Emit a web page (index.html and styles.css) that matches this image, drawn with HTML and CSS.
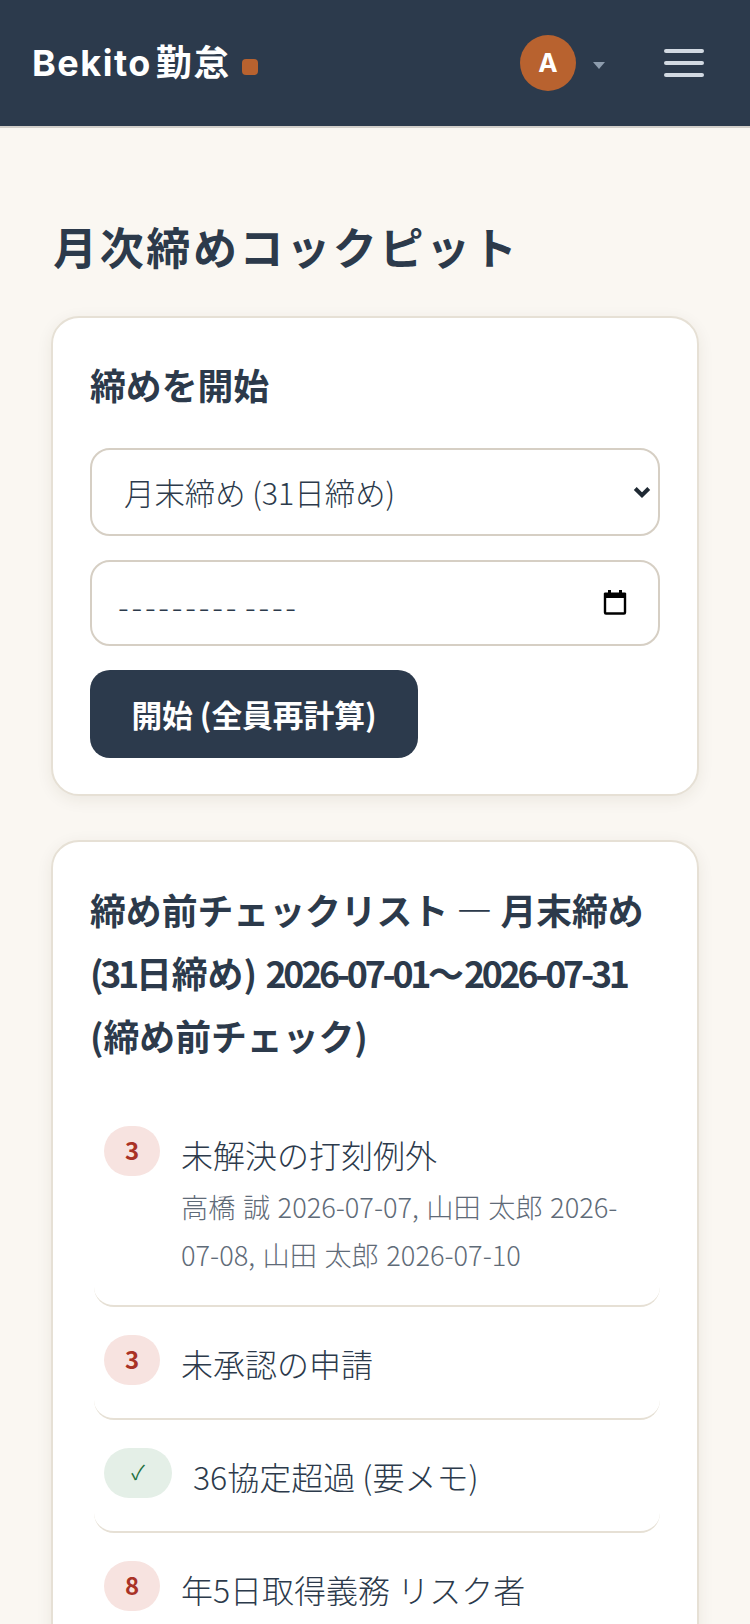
FILE: index.html
```html
<!DOCTYPE html>
<html lang="ja">
<head>
<meta charset="utf-8">
<title>月次締めコックピット</title>
<link rel="stylesheet" href="styles.css">
</head>
<body>
<header class="topbar">
  <div class="brand"><span>Bekito 勤怠</span><span class="brand-dot"></span></div>
  <div class="top-actions">
    <div class="user"><span class="avatar">A</span><span class="caret"></span></div>
    <button class="burger" aria-label="menu"><span></span><span></span><span></span></button>
  </div>
</header>
<main class="page">
  <h1 class="title">月次締めコックピット</h1>
  <section class="card">
    <h2 class="card-title">締めを開始</h2>
    <form class="form">
      <div class="field">
        <select class="control select"><option>月末締め (31日締め)</option></select>
        <svg class="chevron" viewBox="0 0 20 14"><path d="M2.500 2.500 10 10l7.500-7.500" fill="none" stroke="#1f2933" stroke-width="4.500"/></svg>
      </div>
      <div class="field">
        <input class="control date" type="text" value="--------- ----" aria-label="date">
        <svg class="cal" viewBox="0 0 24 26"><path d="M2 5.500h20v18a1 1 0 0 1-1 1H3a1 1 0 0 1-1-1z" fill="none" stroke="#000" stroke-width="2.400"/><path d="M1 4.500a1 1 0 0 1 1-1h3V1h3v2.500h8V1h3v2.500h3a1 1 0 0 1 1 1V9H1z" fill="#000"/></svg>
      </div>
      <button class="primary" type="button">開始 (全員再計算)</button>
    </form>
  </section>
  <section class="card">
    <h2 class="card-title long">締め前チェックリスト — 月末締め <span class="num">(31</span>日締め<span class="num">) 2026-07-01</span>〜<span class="num">2026-07-31</span> (締め前チェック)</h2>
    <ul class="checks">
      <li class="check"><span class="badge bad">3</span><div class="check-body"><div>未解決の打刻例外</div><div class="sub">高橋 誠 2026-07-07, 山田 太郎 2026-07-08, 山田 太郎 2026-07-10</div></div></li>
      <li class="check"><span class="badge bad">3</span><div class="check-body"><div>未承認の申請</div></div></li>
      <li class="check"><span class="badge ok">✓</span><div class="check-body"><div>36協定超過 (要メモ)</div></div></li>
      <li class="check"><span class="badge bad">8</span><div class="check-body"><div>年5日取得義務 リスク者</div></div></li>
    </ul>
  </section>
</main>
</body>
</html>
```
FILE: styles.css
```css
* { box-sizing: border-box; }
html, body { margin: 0; height: 1624px; overflow: hidden; }
body {
  background: #faf7f2;
  color: #2c3a4b;
  font-family: "Noto Sans CJK JP", sans-serif;
  font-weight: 300;
  font-size: 32px;
  line-height: 1.75;
}
.topbar {
  height: 128px;
  background: #2c3a4c;
  border-bottom: 2px solid #d2cfca;
  padding: 0 46px 0 32px;
  display: flex;
  align-items: center;
  justify-content: space-between;
}
.brand { display: flex; align-items: center; gap: 11px; color: #fff; font-family: Inter, "Noto Sans CJK JP", sans-serif; font-size: 36px; font-weight: 700; letter-spacing: 1.500px; word-spacing: -6px; }
.brand-dot { width: 16px; height: 16px; border-radius: 4px; background: #b8622f; margin-top: 8px; }
.top-actions { display: flex; align-items: center; gap: 59px; }
.user { display: flex; align-items: center; gap: 17px; }
.avatar { width: 56px; height: 56px; border-radius: 50%; background: #b8622f; color: #fff; font-family: Inter, sans-serif; font-size: 26px; font-weight: 700; display: flex; align-items: center; justify-content: center; }
.caret { width: 0; height: 0; border: 6px solid transparent; border-top: 7px solid #8d9cad; border-bottom: 0; margin-top: 4px; }
.burger { width: 40px; height: 28px; padding: 0; border: 0; background: none; display: flex; flex-direction: column; justify-content: space-between; }
.burger span { display: block; height: 4px; border-radius: 2px; background: #d2d9e2; }
.page { padding: 80px 51px 0; }
.title { margin: 0 0 31px 2px; font-size: 44px; font-weight: 700; letter-spacing: 2.640px; line-height: 1.75; }
.card {
  background: #fff;
  border: 2px solid #e6e0d5;
  border-radius: 28px;
  box-shadow: 0 4px 16px rgba(60, 50, 30, .08);
  padding: 35px 37px 36px;
  margin-bottom: 44px;
}
.card-title { margin: 0 0 32px; font-size: 35.840px; font-weight: 700; line-height: 1.75; }
.card-title.long { line-height: 63px; margin: 1px 0 31px; }
.num { letter-spacing: -3.300px; word-spacing: 7px; }
.form { display: flex; flex-direction: column; gap: 24px; align-items: flex-start; }
.field { position: relative; width: 100%; }
.control {
  display: block;
  width: 100%;
  height: 88px;
  background: #fff;
  border: 2px solid #d6cfc4;
  border-radius: 20px;
  color: #2c3a4b;
  font: inherit;
  padding: 2px 32px 0;
  appearance: none;
  outline: 0;
}
.select { font-size: 30.400px; }
.date { height: 86px; padding: 5px 26px 0; letter-spacing: 2.800px; word-spacing: -4px; }
.chevron { position: absolute; right: 9px; top: 38px; width: 18px; height: 13px; }
.cal { position: absolute; right: 33px; top: 29px; width: 24px; height: 26px; }
.primary {
  width: 328px;
  height: 88px;
  background: #2c3a4c;
  border: 0;
  border-radius: 20px;
  color: #fff;
  font: inherit;
  font-size: 30.720px;
  font-weight: 700;
  padding: 0;
}
.checks { list-style: none; margin: 0; padding: 0; }
.check {
  display: flex;
  align-items: flex-start;
  gap: 21px;
  margin-left: 4px;
  padding: 28px 14px 27px 10px;
  border-bottom: 2px solid #e6e0d5;
  border-radius: 20px;
}
.badge { flex: none; width: 56px; height: 50px; border-radius: 25px; font-size: 24px; font-weight: 700; line-height: 48px; text-align: center; }
.bad { background: #f7e3e0; color: #a93226; }
.ok { width: 68px; background: #e4efe7; color: #23703f; font-size: 20px; font-weight: 400; }
.sub { color: #5f6b78; font-size: 27.200px; line-height: 48px; word-spacing: 1.500px; }
```
